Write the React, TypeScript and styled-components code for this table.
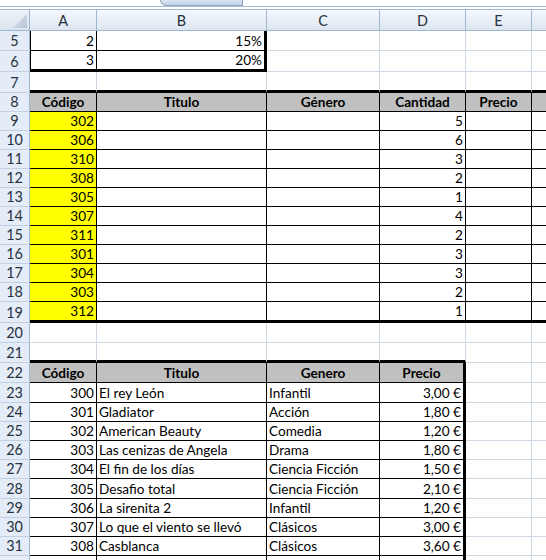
import React from 'react';
import styled, { createGlobalStyle } from 'styled-components';

const GlobalStyle = createGlobalStyle`
  html, body { margin: 0; padding: 0; background: #ffffff; overflow: hidden; }
  body { font-family: Lato, "Liberation Sans", sans-serif; }
`;

const GRID = '1px solid #d0d7e5';
const THIN = '1px solid #000000';
const THICK = '3px solid #000000';
const HEAD_LINE = '#9eb6ce';

const COL_WIDTHS = [30, 67, 170, 113, 86, 66, 60];

const Page = styled.div`
  width: 546px;
  height: 560px;
  overflow: hidden;
  background: #ffffff;
`;

const TopBar = styled.div`
  display: flex;
  height: 6px;
  border-bottom: 1px solid #a9bcd5;
`;

const NameBox = styled.div`
  width: 160px;
  height: 6px;
  overflow: hidden;
  display: flex;
  justify-content: center;
  font-size: 14px;
  color: #000;
`;

const NameText = styled.span`
  margin-top: -13px;
  margin-right: 12px;
  line-height: 16px;
`;

const FxButton = styled.div`
  width: 83px;
  height: 6px;
  box-sizing: border-box;
  background: linear-gradient(#d9e4f2, #c3d3e8);
  border: 1px solid #8ea5c3;
  border-top: none;
  border-bottom-left-radius: 7px;
  border-bottom-right-radius: 1px;
`;

const Spacer = styled.div`
  height: 2px;
  background: #ffffff;
`;

const Sheet = styled.div<{ $rows: string }>`
  display: grid;
  grid-template-columns: ${COL_WIDTHS.map((w) => `${w}px`).join(' ')};
  grid-template-rows: ${(p) => p.$rows};
  width: ${COL_WIDTHS.reduce((a, b) => a + b, 0)}px;
  font-size: 14.4px;
`;

const Corner = styled.div`
  box-sizing: border-box;
  border-top: 1px solid ${HEAD_LINE};
  border-right: 1px solid ${HEAD_LINE};
  border-bottom: 1px solid ${HEAD_LINE};
  background: linear-gradient(#eef2f8, #dae3ee);
  display: flex;
  align-items: flex-end;
  justify-content: flex-end;
  padding: 0 2px 2px 0;
`;

const ColHead = styled.div`
  box-sizing: border-box;
  border-top: 1px solid ${HEAD_LINE};
  border-right: 1px solid ${HEAD_LINE};
  border-bottom: 1px solid ${HEAD_LINE};
  background: linear-gradient(#f5f8fc 0%, #eaf0f7 45%, #dde5ef 100%);
  display: flex;
  align-items: flex-end;
  justify-content: center;
  padding-bottom: 2px;
  line-height: 14px;
  color: #27323f;
  white-space: nowrap;
  overflow: hidden;
`;

const RowHead = styled.div`
  box-sizing: border-box;
  background: #e4ecf7;
  border-right: 1px solid ${HEAD_LINE};
  border-bottom: 1px solid #c3d0e2;
  display: flex;
  align-items: flex-end;
  justify-content: center;
  padding-bottom: 2px;
  line-height: 14px;
  color: #27323f;
  overflow: hidden;
`;

const Cell = styled.div<{
  $bg?: string;
  $align: 'l' | 'r' | 'c';
  $bold?: boolean;
  $r: string;
  $b: string;
  $l?: string;
}>`
  box-sizing: border-box;
  background: ${(p) => p.$bg || 'transparent'};
  border-right: ${(p) => p.$r};
  border-bottom: ${(p) => p.$b};
  border-left: ${(p) => p.$l || 'none'};
  display: flex;
  align-items: flex-end;
  justify-content: ${(p) => (p.$align === 'l' ? 'flex-start' : p.$align === 'r' ? 'flex-end' : 'center')};
  padding: 0 2px 2px 2px;
  font-size: 13.6px;
  line-height: 14px;
  font-weight: ${(p) => (p.$bold ? 700 : 400)};
  color: #000000;
  white-space: nowrap;
  overflow: hidden;
`;

type Spec = {
  t?: string;
  al: 'l' | 'r' | 'c';
  bg?: string;
  bold?: boolean;
  r: string;
  b: string;
  l?: string;
};

const t1A = [302, 306, 310, 308, 305, 307, 311, 301, 304, 303, 312];
const t1D = [5, 6, 3, 2, 1, 4, 2, 3, 3, 2, 1];
const t2: [string, string, string, string][] = [
  ['300', 'El rey León', 'Infantil', '3,00 €'],
  ['301', 'Gladiator', 'Acción', '1,80 €'],
  ['302', 'American Beauty', 'Comedia', '1,20 €'],
  ['303', 'Las cenizas de Angela', 'Drama', '1,80 €'],
  ['304', 'El fin de los días', 'Ciencia Ficción', '1,50 €'],
  ['305', 'Desafio total', 'Ciencia Ficción', '2,10 €'],
  ['306', 'La sirenita 2', 'Infantil', '1,20 €'],
  ['307', 'Lo que el viento se llevó', 'Clásicos', '3,00 €'],
  ['308', 'Casblanca', 'Clásicos', '3,60 €'],
];

const HEIGHTS: Record<number, number> = {
  5: 20, 6: 21, 7: 21, 8: 19, 19: 21, 20: 20, 21: 20, 22: 20, 23: 20, 28: 20,
};
const rowNums = Array.from({ length: 28 }, (_, i) => i + 5);
const LAST_VISIBLE = 31;
const heightOf = (n: number) => HEIGHTS[n] ?? 19;

function specFor(row: number, col: number): Spec {
  const s: Spec = { al: 'l', r: GRID, b: GRID };
  if ((row === 5 || row === 6) && col <= 1) {
    s.r = col === 1 ? THICK : THIN;
    s.b = row === 6 ? THICK : THIN;
    s.al = 'r';
    if (col === 0) {
      s.l = THIN;
      s.t = row === 5 ? '2' : '3';
    } else {
      s.t = row === 5 ? '15%' : '20%';
    }
  }
  if (row === 7) s.b = THICK;
  if (row >= 8 && row <= 19) {
    s.r = THIN;
    s.b = row === 19 ? THICK : THIN;
    if (row === 8) {
      s.bg = '#c0c0c0';
      s.bold = true;
      s.al = 'c';
      s.t = ['Código', 'Titulo', 'Género', 'Cantidad', 'Precio', ''][col];
    } else {
      const i = row - 9;
      if (col === 0) {
        s.bg = '#ffff00';
        s.al = 'r';
        s.t = String(t1A[i]);
      }
      if (col === 3) {
        s.al = 'r';
        s.t = String(t1D[i]);
      }
    }
  }
  if (row === 21 && col <= 3) s.b = THICK;
  if (row >= 22 && col <= 3) {
    s.r = col === 3 ? THICK : THIN;
    s.b = THIN;
    if (row === 22) {
      s.bg = '#c0c0c0';
      s.bold = true;
      s.al = 'c';
      s.t = ['Código', 'Titulo', 'Genero', 'Precio'][col];
    } else {
      const d = t2[row - 23];
      if (d) {
        s.t = d[col];
        s.al = col === 0 || col === 3 ? 'r' : 'l';
      }
    }
  }
  return s;
}

const CornerMark = () => (
  <svg width="14" height="14" viewBox="0 0 14 14">
    <defs>
      <linearGradient id="cg" x1="0" y1="0" x2="1" y2="1">
        <stop offset="0" stopColor="#d5dee9" />
        <stop offset="1" stopColor="#b9c7d8" />
      </linearGradient>
    </defs>
    <polygon points="14,0 14,14 0,14" fill="url(#cg)" />
  </svg>
);

export default function App() {
  const rowsTemplate = ['22px', ...rowNums.map((n) => `${heightOf(n)}px`)].join(' ');
  return (
    <Page>
      <GlobalStyle />
      <TopBar>
        <NameBox>
          <NameText>A30</NameText>
        </NameBox>
        <FxButton />
      </TopBar>
      <Spacer />
      <Sheet $rows={rowsTemplate}>
        <Corner>
          <CornerMark />
        </Corner>
        {['A', 'B', 'C', 'D', 'E', ''].map((c, i) => (
          <ColHead key={`h${i}`}>{c}</ColHead>
        ))}
        {rowNums.map((n) => (
          <React.Fragment key={n}>
            <RowHead>{n <= LAST_VISIBLE ? n : ''}</RowHead>
            {[0, 1, 2, 3, 4, 5].map((c) => {
              const s = specFor(n, c);
              return (
                <Cell
                  key={c}
                  $bg={s.bg}
                  $align={s.al}
                  $bold={s.bold}
                  $r={s.r}
                  $b={s.b}
                  $l={s.l}
                >
                  {s.t}
                </Cell>
              );
            })}
          </React.Fragment>
        ))}
      </Sheet>
    </Page>
  );
}
